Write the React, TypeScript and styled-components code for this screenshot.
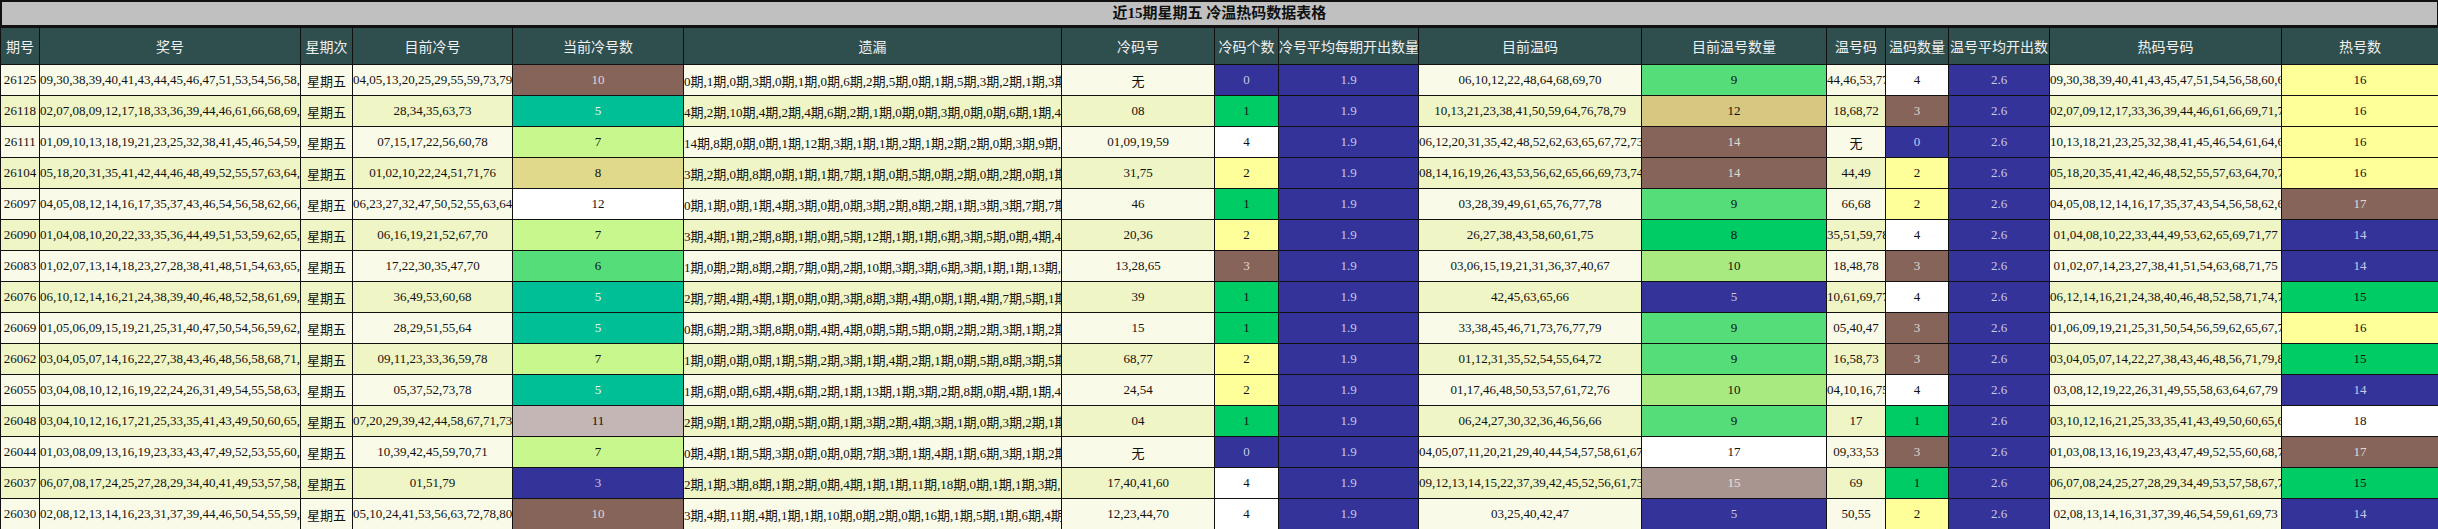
import React from "react";
import styled, { createGlobalStyle } from "styled-components";

const Global = createGlobalStyle`
  html, body { margin: 0; padding: 0; background: #fff; }
`;

const Table = styled.table`
  width: 2438px;
  border-collapse: collapse;
  table-layout: fixed;
  font-family: "Liberation Serif", "Noto Sans CJK SC", serif;
  font-size: 13px;
  color: #111;
`;

const Title = styled.caption`
  height: 23px;
  line-height: 23px;
  background: #c0c0c0;
  border: 2px solid #111;
  border-bottom: 2px solid #111;
  font-family: "Liberation Serif", "Noto Sans CJK SC", serif;
  font-weight: bold;
  font-size: 15px;
  padding: 0;
`;

const HeadCell = styled.th<{ $w: number }>`
  width: ${(p) => p.$w}px;
  height: 36px;
  background: #2f4f4f;
  color: #f0f0f0;
  border: 1px solid #111;
  font-family: "Noto Sans CJK SC", sans-serif;
  font-weight: normal;
  font-size: 14px;
  padding: 0;
  white-space: nowrap;
  overflow: hidden;
`;

const Row = styled.tr<{ $alt: boolean }>`
  height: 31px;
  background: ${(p) => (p.$alt ? "#f0f5c6" : "#f9fbe8")};
`;

const Cell = styled.td<{ $bg?: string; $fg?: string }>`
  border: 1px solid #111;
  text-align: center;
  padding: 0;
  white-space: nowrap;
  overflow: hidden;
  background: ${(p) => p.$bg || "transparent"};
  color: ${(p) => p.$fg || "#111"};
`;

const P: Record<string, [string, string]> = {
  br: ["#86645a", "#e0d8d4"],
  te: ["#00bf96", "#e6f6ef"],
  lg: ["#c8f78e", "#111"],
  kh: ["#e0d98a", "#111"],
  wh: ["#ffffff", "#111"],
  gr: ["#55dd7a", "#111"],
  ro: ["#c4b6b4", "#111"],
  bl: ["#333399", "#c8c8e8"],
  ye: ["#ffff99", "#111"],
  bg: ["#00cc66", "#111"],
  mg: ["#a8ea80", "#111"],
  dk: ["#d6c880", "#111"],
  gb: ["#a89590", "#e8e0dc"],
};

const coldCnt = (n: number) => ({ 10: "br", 5: "te", 7: "lg", 8: "kh", 12: "wh", 6: "gr", 11: "ro", 3: "bl" } as any)[n];
const coldNum = (n: number) => ({ 0: "bl", 1: "bg", 4: "wh", 2: "ye", 3: "br" } as any)[n];
const warmCnt = (n: number) => ({ 9: "gr", 12: "dk", 14: "br", 8: "bg", 10: "mg", 5: "bl", 17: "wh", 15: "gb" } as any)[n];
const hotCnt = (n: number) => ({ 16: "ye", 17: "br", 14: "bl", 15: "bg", 18: "wh" } as any)[n];

type R = [string, string, string, number, string, string, number, string, number, string, number, string, number];

const rows: R[] = [
  ["26125","09,30,38,39,40,41,43,44,45,46,47,51,53,54,56,58,60,67,76,77","04,05,13,20,25,29,55,59,73,79",10,"0期,1期,0期,3期,0期,1期,0期,6期,2期,5期,0期,1期,5期,3期,2期,1期,3期,4期,0期,5期","无",0,"06,10,12,22,48,64,68,69,70",9,"44,46,53,77",4,"09,30,38,39,40,41,43,45,47,51,54,56,58,60,67,76",16],
  ["26118","02,07,08,09,12,17,18,33,36,39,44,46,61,66,68,69,71,72,75,80","28,34,35,63,73",5,"4期,2期,10期,4期,2期,4期,6期,2期,1期,0期,0期,3期,0期,0期,6期,1期,4期,5期,0期,1期","08",1,"10,13,21,23,38,41,50,59,64,76,78,79",12,"18,68,72",3,"02,07,09,12,17,33,36,39,44,46,61,66,69,71,75,80",16],
  ["26111","01,09,10,13,18,19,21,23,25,32,38,41,45,46,54,59,61,64,68,79","07,15,17,22,56,60,78",7,"14期,8期,0期,0期,1期,12期,3期,1期,1期,2期,1期,2期,2期,0期,3期,9期,1期,1期,0期,3期","01,09,19,59",4,"06,12,20,31,35,42,48,52,62,63,65,67,72,73",14,"无",0,"10,13,18,21,23,25,32,38,41,45,46,54,61,64,68,79",16],
  ["26104","05,18,20,31,35,41,42,44,46,48,49,52,55,57,63,64,70,72,75,79","01,02,10,22,24,51,71,76",8,"3期,2期,0期,8期,0期,1期,1期,7期,1期,0期,5期,0期,2期,0期,2期,0期,1期,4期,20期,1期","31,75",2,"08,14,16,19,26,43,53,56,62,65,66,69,73,74",14,"44,49",2,"05,18,20,35,41,42,46,48,52,55,57,63,64,70,72,79",16],
  ["26097","04,05,08,12,14,16,17,35,37,43,46,54,56,58,62,66,68,69,70,74","06,23,27,32,47,50,52,55,63,64,75,79",12,"0期,1期,0期,1期,4期,3期,0期,0期,3期,2期,8期,2期,1期,3期,3期,7期,7期,1期,1期,2期","46",1,"03,28,39,49,61,65,76,77,78",9,"66,68",2,"04,05,08,12,14,16,17,35,37,43,54,56,58,62,69,70,74",17],
  ["26090","01,04,08,10,20,22,33,35,36,44,49,51,53,59,62,65,69,71,77,78","06,16,19,21,52,67,70",7,"3期,4期,1期,2期,8期,1期,0期,5期,12期,1期,1期,6期,3期,5期,0期,4期,4期,0期,0期,6期","20,36",2,"26,27,38,43,58,60,61,75",8,"35,51,59,78",4,"01,04,08,10,22,33,44,49,53,62,65,69,71,77",14],
  ["26083","01,02,07,13,14,18,23,27,28,38,41,48,51,54,63,65,68,71,75,78","17,22,30,35,47,70",6,"1期,0期,2期,8期,2期,7期,0期,2期,10期,3期,3期,6期,3期,1期,1期,13期,0期,4期,3期,7期","13,28,65",3,"03,06,15,19,21,31,36,37,40,67",10,"18,48,78",3,"01,02,07,14,23,27,38,41,51,54,63,68,71,75",14],
  ["26076","06,10,12,14,16,21,24,38,39,40,46,48,52,58,61,69,71,74,75,77","36,49,53,60,68",5,"2期,7期,4期,4期,1期,0期,0期,3期,8期,3期,4期,0期,1期,4期,7期,5期,1期,2期,2期,5期","39",1,"42,45,63,65,66",5,"10,61,69,77",4,"06,12,14,16,21,24,38,40,46,48,52,58,71,74,75",15],
  ["26069","01,05,06,09,15,19,21,25,31,40,47,50,54,56,59,62,65,67,72,80","28,29,51,55,64",5,"0期,6期,2期,3期,8期,0期,4期,4期,0期,5期,5期,0期,2期,2期,3期,1期,2期,0期,4期,1期","15",1,"33,38,45,46,71,73,76,77,79",9,"05,40,47",3,"01,06,09,19,21,25,31,50,54,56,59,62,65,67,72,80",16],
  ["26062","03,04,05,07,14,16,22,27,38,43,46,48,56,58,68,71,73,77,79,80","09,11,23,33,36,59,78",7,"1期,0期,0期,0期,1期,5期,2期,3期,1期,4期,2期,1期,0期,5期,8期,3期,5期,10期,4期,3期","68,77",2,"01,12,31,35,52,54,55,64,72",9,"16,58,73",3,"03,04,05,07,14,22,27,38,43,46,48,56,71,79,80",15],
  ["26055","03,04,08,10,12,16,19,22,24,26,31,49,54,55,58,63,64,67,75,79","05,37,52,73,78",5,"1期,6期,0期,6期,4期,6期,2期,1期,13期,1期,3期,2期,8期,0期,4期,1期,4期,1期,5期,0期","24,54",2,"01,17,46,48,50,53,57,61,72,76",10,"04,10,16,75",4,"03,08,12,19,22,26,31,49,55,58,63,64,67,79",14],
  ["26048","03,04,10,12,16,17,21,25,33,35,41,43,49,50,60,65,69,75,76,80","07,20,29,39,42,44,58,67,71,73,78",11,"2期,9期,1期,2期,0期,5期,0期,1期,3期,2期,4期,3期,1期,0期,3期,2期,1期,0期,2期,0期","04",1,"06,24,27,30,32,36,46,56,66",9,"17",1,"03,10,12,16,21,25,33,35,41,43,49,50,60,65,69,75,76,80",18],
  ["26044","01,03,08,09,13,16,19,23,33,43,47,49,52,53,55,60,68,74,76,79","10,39,42,45,59,70,71",7,"0期,4期,1期,5期,3期,0期,0期,0期,7期,3期,1期,4期,1期,6期,3期,1期,2期,1期,3期,1期","无",0,"04,05,07,11,20,21,29,40,44,54,57,58,61,67,75,78,80",17,"09,33,53",3,"01,03,08,13,16,19,23,43,47,49,52,55,60,68,74,76,79",17],
  ["26037","06,07,08,17,24,25,27,28,29,34,40,41,49,53,57,58,60,67,69,72","01,51,79",3,"2期,1期,3期,8期,1期,2期,0期,4期,1期,1期,11期,18期,0期,1期,1期,3期,10期,0期,6期,1期","17,40,41,60",4,"09,12,13,14,15,22,37,39,42,45,52,56,61,73,78",15,"69",1,"06,07,08,24,25,27,28,29,34,49,53,57,58,67,72",15],
  ["26030","02,08,12,13,14,16,23,31,37,39,44,46,50,54,55,59,61,69,70,73","05,10,24,41,53,56,63,72,78,80",10,"3期,4期,11期,4期,1期,1期,10期,0期,2期,0期,16期,1期,5期,1期,6期,4期,2期,0期,8期,0期","12,23,44,70",4,"03,25,40,42,47",5,"50,55",2,"02,08,13,14,16,31,37,39,46,54,59,61,69,73",14],
];

const widths = [38,260,51,159,170,377,152,63,139,222,184,58,62,100,231,156];
const heads = ["期号","奖号","星期次","目前冷号","当前冷号数","遗漏","冷码号","冷码个数","冷号平均每期开出数量","目前温码","目前温号数量","温号码","温码数量","温号平均开出数","热码号码","热号数"];

const Colored = ({ k, v }: { k: string; v: React.ReactNode }) => (
  <Cell $bg={P[k][0]} $fg={P[k][1]}>{v}</Cell>
);

export default function App() {
  return (
    <>
      <Global />
      <Table>
        <Title>近15期星期五 冷温热码数据表格</Title>
        <thead>
          <tr>{heads.map((h, i) => <HeadCell key={h} $w={widths[i]}>{h}</HeadCell>)}</tr>
        </thead>
        <tbody>
          {rows.map((r, i) => (
            <Row key={r[0]} $alt={i % 2 === 1}>
              <Cell>{r[0]}</Cell>
              <Cell>{r[1]}</Cell>
              <Cell>星期五</Cell>
              <Cell>{r[2]}</Cell>
              <Colored k={coldCnt(r[3])} v={r[3]} />
              <Cell>{r[4]}</Cell>
              <Cell>{r[5]}</Cell>
              <Colored k={coldNum(r[6])} v={r[6]} />
              <Colored k="bl" v="1.9" />
              <Cell>{r[7]}</Cell>
              <Colored k={warmCnt(r[8])} v={r[8]} />
              <Cell>{r[9]}</Cell>
              <Colored k={coldNum(r[10])} v={r[10]} />
              <Colored k="bl" v="2.6" />
              <Cell>{r[11]}</Cell>
              <Colored k={hotCnt(r[12])} v={r[12]} />
            </Row>
          ))}
        </tbody>
      </Table>
    </>
  );
}
